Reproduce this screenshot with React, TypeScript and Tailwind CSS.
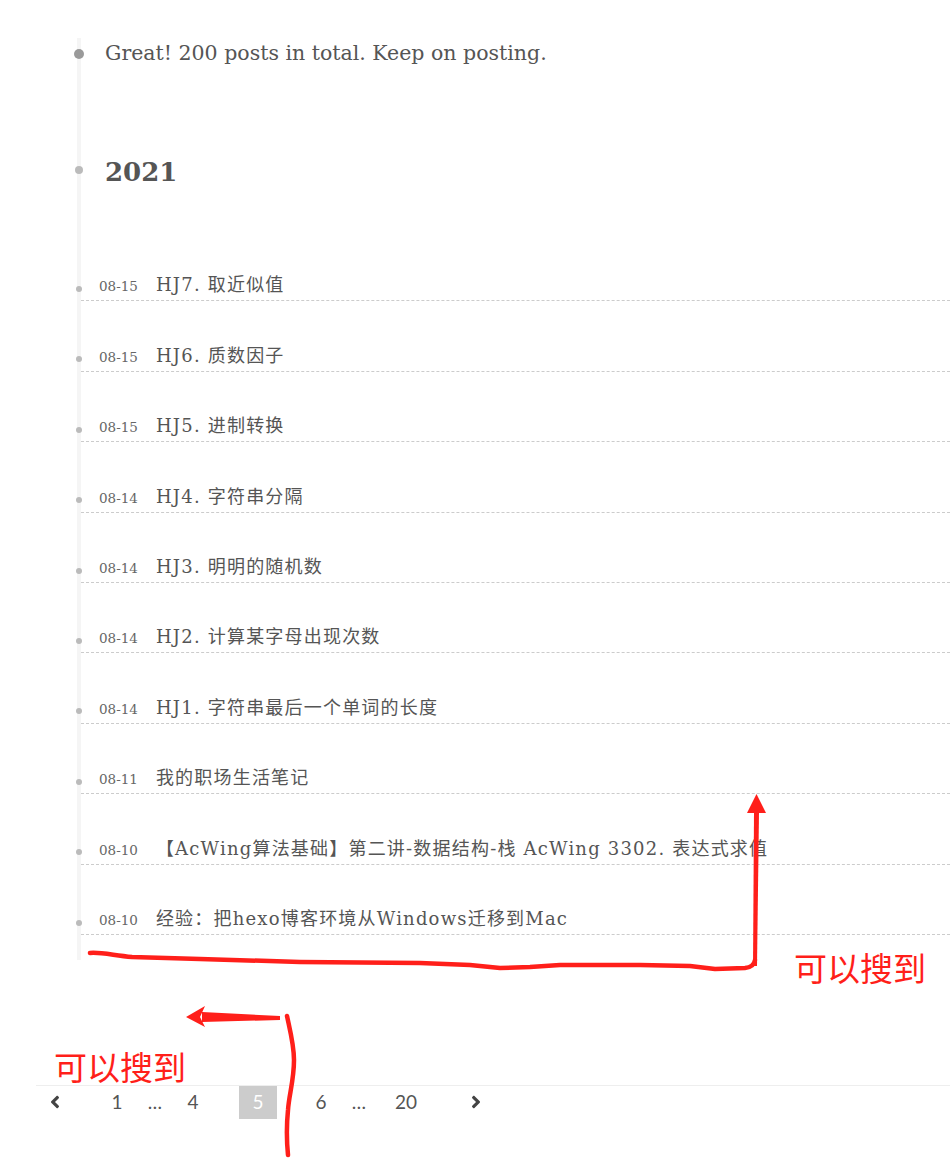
import React from "react";
import { FaAngleLeft, FaAngleRight } from "react-icons/fa";

const posts: [string, string][] = [
  ["08-15", "HJ7. 取近似值"],
  ["08-15", "HJ6. 质数因子"],
  ["08-15", "HJ5. 进制转换"],
  ["08-14", "HJ4. 字符串分隔"],
  ["08-14", "HJ3. 明明的随机数"],
  ["08-14", "HJ2. 计算某字母出现次数"],
  ["08-14", "HJ1. 字符串最后一个单词的长度"],
  ["08-11", "我的职场生活笔记"],
  ["08-10", "【AcWing算法基础】第二讲-数据结构-栈 AcWing 3302. 表达式求值"],
  ["08-10", "经验：把hexo博客环境从Windows迁移到Mac"],
];

function Annotations() {
  const red = "#ff1f1a";
  return (
    <svg
      className="absolute left-0 top-0 pointer-events-none"
      width={950}
      height={1160}
      viewBox="0 0 950 1160"
    >
      <path
        d="M90,953 C100,952 112,955 132,957 L200,959 L300,962 L420,963 L470,965 L500,968 L530,967 L560,965 L640,965 L690,966 L715,969 L745,968 Q754,967 755,960"
        fill="none"
        stroke={red}
        strokeWidth={4.5}
        strokeLinecap="round"
        strokeLinejoin="round"
      />
      <polygon points="753,966 757,966 759,812 754,812" fill={red} />
      <polygon points="756.5,794 747,813 766,813" fill={red} />
      <polygon points="280,1016 280,1020 202,1022 202,1012" fill={red} />
      <polygon points="186,1017 205,1006 200,1017 205,1027" fill={red} />
      <path
        d="M287,1016 C290,1030 294,1045 294,1060 C294,1080 289,1095 288,1110 C286,1130 287,1145 288,1155"
        fill="none"
        stroke={red}
        strokeWidth={4.5}
        strokeLinecap="round"
      />
    </svg>
  );
}

export default function App() {
  return (
    <div className="relative w-[950px] h-[1160px] bg-white overflow-hidden font-['DejaVu_Serif','Noto_Sans_CJK_SC',serif] text-[#555]">
      <div className="mt-[54px] ml-[77px] border-l-4 border-[#f5f5f5] pb-[25px]">
        {/* header */}
        <div className="relative -mt-[16px] h-[30px] pl-[24px] text-[20.5px] leading-[30px] text-[#555]">
          <span className="absolute -left-[7px] top-[11px] h-[10px] w-[10px] rounded-full bg-[#9a9a9a]" />
          Great! 200 posts in total. Keep on posting.
        </div>
        {/* year */}
        <div className="relative mt-[84px] h-[40px] pl-[24px] text-[26px] font-bold leading-[40px] text-[#555]">
          <span className="absolute -left-[6px] top-[14px] h-[8px] w-[8px] rounded-full bg-[#bbb]" />
          2021
        </div>
        {/* posts */}
        <div className="mt-[39px]">
          {posts.map(([d, t], i) => (
            <div
              key={i}
              className="relative flex h-[70.4px] items-end border-b border-dashed border-[#ccc] pl-[18px]"
            >
              <span className="absolute -left-[5px] top-[55px] h-[6px] w-[6px] rounded-full bg-[#bbb]" />
              <div className="flex items-baseline gap-[18px] leading-[28px] whitespace-nowrap">
                <span className="text-[13.5px] text-[#666]">{d}</span>
                <span className="text-[18px] tracking-[1.2px] text-[#555]">{t}</span>
              </div>
            </div>
          ))}
        </div>
      </div>

      {/* pagination */}
      <div className="mt-[125px] ml-[36px] flex h-[34px] items-stretch border-t border-[#eee] font-['Lato',sans-serif] text-[19px] text-[#555]">
        <div className="flex w-[38px] items-center justify-center text-[#444]">
          <FaAngleLeft size={20} />
        </div>
        <div className="ml-[24px] flex w-[38px] items-center justify-center">1</div>
        <div className="flex w-[38px] items-center justify-center">…</div>
        <div className="flex w-[38px] items-center justify-center">4</div>
        <div className="ml-[27px] flex h-[33px] w-[38px] items-center justify-center bg-[#ccc] text-white">5</div>
        <div className="ml-[25px] flex w-[38px] items-center justify-center">6</div>
        <div className="flex w-[38px] items-center justify-center">…</div>
        <div className="ml-[9px] flex w-[38px] items-center justify-center">20</div>
        <div className="ml-[32px] flex w-[38px] items-center justify-center text-[#444]">
          <FaAngleRight size={20} />
        </div>
      </div>

      <Annotations />

      <div className="absolute left-[794px] top-[950px] font-['Noto_Sans_CJK_SC',sans-serif] text-[33px] leading-[34px] text-[#ff1f1a] whitespace-nowrap">
        可以搜到
      </div>
      <div className="absolute left-[54px] top-[1049px] font-['Noto_Sans_CJK_SC',sans-serif] text-[33px] leading-[34px] text-[#ff1f1a] whitespace-nowrap">
        可以搜到
      </div>
    </div>
  );
}
